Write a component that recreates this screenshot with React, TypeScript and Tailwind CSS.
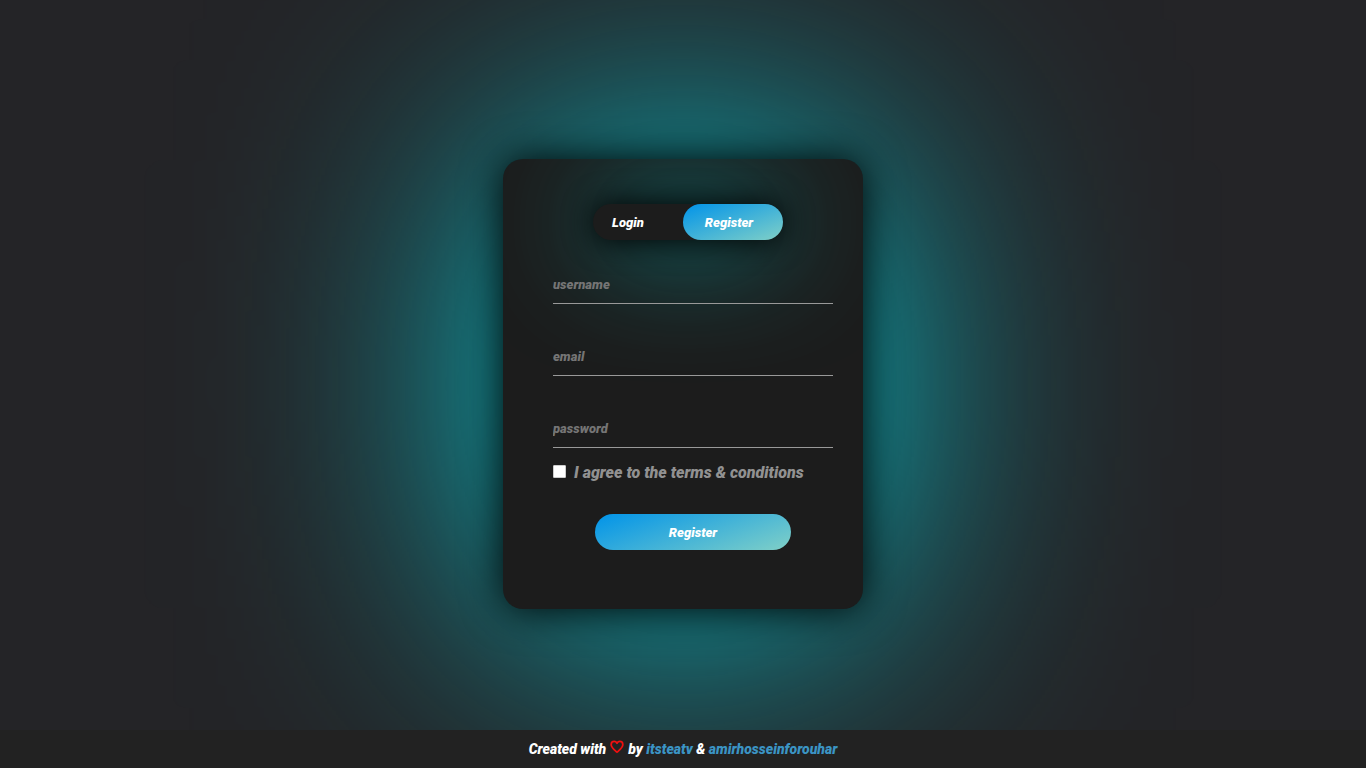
import { useState } from "react";

const fieldClass =
  "block h-9 w-full border-b border-[#999] bg-transparent pb-0.5 text-[13px] font-black italic text-white outline-none placeholder:text-[#757575]";

const linkClass = "text-[#3b94c4]";

function HeartIcon() {
  return (
    <svg
      aria-hidden="true"
      viewBox="0 0 24 24"
      className="mx-1 inline-block size-[14px] align-baseline"
      fill="none"
      stroke="#f01010"
      strokeWidth="3"
      strokeLinejoin="round"
    >
      <path d="M12 21 C9 18 2 13 2 8 C2 4.5 4.5 2.500 7.200 2.500 C9.500 2.500 11 3.800 12 5.500 C13 3.800 14.500 2.500 16.800 2.500 C19.500 2.500 22 4.500 22 8 C22 13 15 18 12 21 Z" />
    </svg>
  );
}

export default function App() {
  const [mode, setMode] = useState<"login" | "register">("register");
  const registering = mode === "register";
  const title = registering ? "Register" : "Login";

  return (
    <div className="flex min-h-screen flex-col overflow-hidden bg-[#242427] font-['Roboto',sans-serif] italic">
      <main className="flex flex-1 items-center justify-center pt-[38px]">
        <div className="relative w-[360px]">
          <div aria-hidden="true" className="absolute inset-0 rounded-[20px] bg-[#00e6f2] blur-[150px]" />
          <section className="relative overflow-hidden rounded-[20px] bg-[#1c1c1c] pt-[45px] pb-[59px] shadow-[0_0_40px_black]">
            <div className="ml-[90px] flex h-9 w-[190px] rounded-[18px] bg-[#1c1c1c] text-[13px] font-black text-white shadow-[0_0_30px_black,0_0_120px_#00c0c4]">
              <button
                type="button"
                onClick={() => setMode("login")}
                className={
                  registering
                    ? "w-[90px] pt-0.5 pr-5 italic"
                    : "w-[100px] rounded-[18px] bg-linear-[160deg,#0093e9_0%,#80d0c7_100%] pt-0.5 italic"
                }
              >
                Login
              </button>
              <button
                type="button"
                onClick={() => setMode("register")}
                className={
                  registering
                    ? "w-[100px] rounded-[18px] bg-linear-[160deg,#0093e9_0%,#80d0c7_100%] pt-0.5 pr-2 italic"
                    : "w-[90px] pt-0.5 italic"
                }
              >
                Register
              </button>
            </div>

            <form
              className="ml-[50px] w-[280px] pt-7"
              onSubmit={(event) => event.preventDefault()}
            >
              <div className="flex flex-col gap-9">
                <input className={fieldClass} type="text" placeholder="username" aria-label="username" />
                <input className={fieldClass} type="email" placeholder="email" aria-label="email" />
                <input className={fieldClass} type="password" placeholder="password" aria-label="password" />
              </div>
              <label className="mt-[13px] flex h-6 items-center gap-2 text-base font-black text-[#919191]">
                <input
                  type="checkbox"
                  className="mb-1 size-[13px] appearance-none rounded-[1px] border border-[#ccc] bg-white checked:bg-[#0093e9]"
                />
                I agree to the terms &amp; conditions
              </label>
              <button
                type="submit"
                className="mx-auto mt-[29px] block h-9 w-[196px] rounded-[18px] bg-linear-[160deg,#0093e9_0%,#80d0c7_100%] pt-0.5 text-[13px] font-black italic text-white"
              >
                {title}
              </button>
            </form>
          </section>
        </div>
      </main>

      <footer className="relative flex h-[38px] items-center justify-center bg-[#222] text-sm font-black text-white">
        <p>
          Created with
          <HeartIcon />
          by <a href="#itsteatv" className={linkClass}>itsteatv</a> &amp;{" "}
          <a href="#amirhosseinforouhar" className={linkClass}>amirhosseinforouhar</a>
        </p>
      </footer>
    </div>
  );
}
